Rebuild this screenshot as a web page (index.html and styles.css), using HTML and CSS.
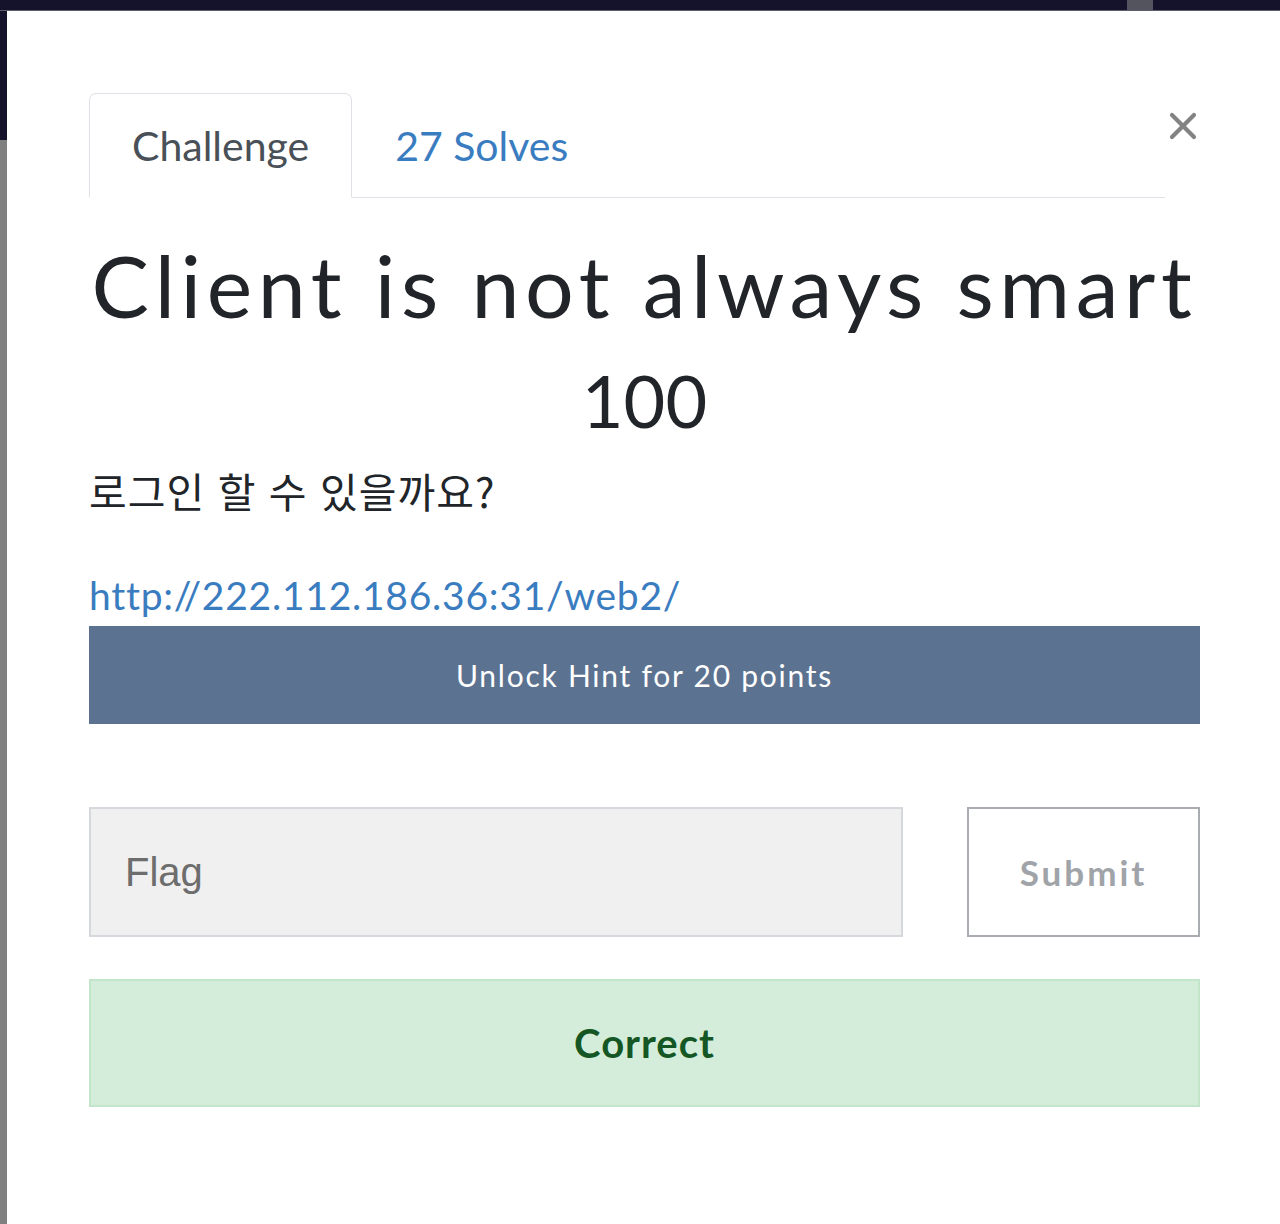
FILE: index.html
```html
<!DOCTYPE html>
<html lang="ko">

<head>
  <meta charset="UTF-8">
  <meta name="viewport" content="width=device-width, initial-scale=1.0">
  <title>Challenge</title>
  <link rel="stylesheet" href="styles.css">
</head>

<body>
  <div class="topbar"><span class="topbar-stub"></span></div>
  <div class="frame">
    <div class="side"></div>
    <div class="modal">
      <div class="modal-header">
        <ul class="nav-tabs">
          <li class="tab active">Challenge</li>
          <li class="tab"><a href="#">27 Solves</a></li>
        </ul>
        <button type="button" class="close" aria-label="Close">
          <svg width="28" height="28" viewBox="0 0 28 28">
            <path d="M3 3 L25 25 M25 3 L3 25" stroke="#838383" stroke-width="4.2" stroke-linecap="round" />
          </svg>
        </button>
      </div>

      <h1 class="challenge-name">Client is not always smart</h1>
      <h3 class="challenge-value">100</h3>
      <p class="challenge-desc">로그인 할 수 있을까요?</p>
      <a class="challenge-link" href="#">http://222.112.186.36:31/web2/</a>

      <button type="button" class="btn-hint">Unlock Hint for 20 points</button>

      <div class="submit-row">
        <input type="text" class="flag-input" placeholder="Flag">
        <button type="button" class="btn-submit">Submit</button>
      </div>

      <div class="alert-success">Correct</div>
    </div>
  </div>
</body>

</html>
```

FILE: styles.css
```css
body {
  margin: 0;
  padding: 0;
  background-color: #fff;
  font-family: Lato, "Open Sans", sans-serif;
  overflow: hidden;
}

.topbar {
  height: 10px;
  background-color: #15132b;
  border-bottom: 1px solid #5e5e6c;
  position: relative;
}

.topbar-stub {
  position: absolute;
  left: 1127px;
  top: 0;
  width: 26px;
  height: 10px;
  background-color: #54545f;
}

.frame {
  display: flex;
  min-height: 1213px;
}

.side {
  width: 7px;
  flex-shrink: 0;
  background: linear-gradient(#15132b 0, #15132b 129px, #808080 129px);
}

.modal {
  flex: 1;
  background: #fff;
  padding: 82px 80px 0 82px;
}

.modal-header {
  display: flex;
}

.nav-tabs {
  flex: 1;
  display: flex;
  list-style: none;
  margin: 0;
  padding: 0;
  border-bottom: 1px solid #dee2e6;
}

.tab {
  margin-bottom: -1px;
  padding: 27px 42px 26px;
  font-size: 41px;
  line-height: 50px;
  color: #495057;
  border: 1px solid transparent;
  border-radius: 7px 7px 0 0;
}

.tab.active {
  border-color: #dee2e6 #dee2e6 #fff;
}

.tab a {
  color: #3a7cc0;
  text-decoration: none;
}

.close {
  width: 35px;
  padding: 0;
  margin-top: 19px;
  align-self: flex-start;
  background: none;
  border: none;
  display: flex;
  justify-content: center;
  cursor: pointer;
}

.challenge-name {
  margin: 37px 0 0;
  font-size: 86px;
  line-height: 100px;
  font-weight: 400;
  letter-spacing: 5.6px;
  text-align: center;
  color: #212529;
}

.challenge-value {
  margin: 25px 0 0;
  font-size: 72px;
  line-height: 80px;
  font-weight: 400;
  text-align: center;
  color: #212529;
}

.challenge-desc {
  margin: 27px 0 0;
  font-family: "Noto Sans CJK KR", sans-serif;
  font-size: 41px;
  line-height: 46px;
  letter-spacing: 1px;
  color: #212529;
}

.challenge-link {
  display: block;
  margin-top: 60px;
  font-size: 39px;
  line-height: 44px;
  letter-spacing: 0.75px;
  color: #3a7cc0;
  text-decoration: none;
}

.btn-hint {
  display: block;
  width: 100%;
  height: 98px;
  margin-top: 9px;
  background-color: #5b7290;
  color: #fff;
  border: none;
  font-family: Lato, sans-serif;
  font-size: 30px;
  letter-spacing: 1.75px;
  cursor: pointer;
}

.submit-row {
  display: flex;
  gap: 64px;
  margin-top: 83px;
  height: 130px;
}

.flag-input {
  flex: 1;
  box-sizing: border-box;
  height: 130px;
  padding: 0 34px;
  background-color: #f0f0f0;
  border: 2px solid #d5d8dc;
  font-family: "Liberation Sans", Arial, sans-serif;
  font-size: 40px;
  color: #333;
}

.flag-input::placeholder {
  color: #6d6d6d;
}

.btn-submit {
  width: 233px;
  height: 130px;
  background-color: #fff;
  border: 2px solid #a9acb0;
  color: #a0a4a8;
  font-family: Lato, sans-serif;
  font-weight: 700;
  font-size: 35px;
  letter-spacing: 3px;
  cursor: pointer;
}

.alert-success {
  margin-top: 42px;
  height: 124px;
  display: flex;
  align-items: center;
  justify-content: center;
  background-color: #d4edda;
  border: 2px solid #c3e6cb;
  color: #155724;
  font-weight: 700;
  font-size: 40px;
  letter-spacing: 1px;
}
```
